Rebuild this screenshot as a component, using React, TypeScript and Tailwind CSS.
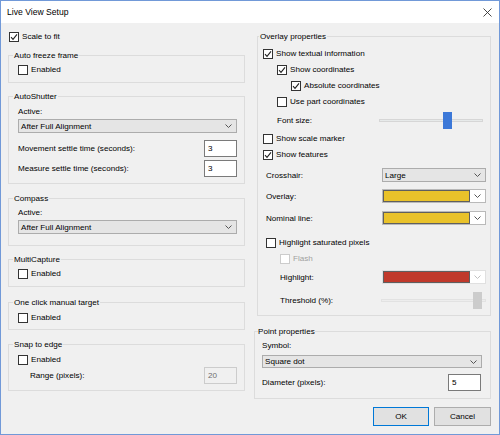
import React from 'react';

function CheckBox({ checked = false, disabled = false }: { checked?: boolean; disabled?: boolean }) {
  return (
    <span
      className={`flex items-center justify-center w-[10px] h-[10px] shrink-0 border bg-white ${
        disabled ? 'border-[#cccccc]' : 'border-[#333333]'
      }`}
    >
      {checked && (
        <svg width="8" height="8" viewBox="0 0 8 8">
          <path d="M1 4.2 L3 6.3 L7 1.4" fill="none" stroke="#222" strokeWidth="1.1" />
        </svg>
      )}
    </span>
  );
}

function CheckRow({
  label, checked, disabled, className = '',
}: { label: string; checked?: boolean; disabled?: boolean; className?: string }) {
  return (
    <div className={`flex items-center h-[13px] gap-[3px] ${className}`}>
      <CheckBox checked={checked} disabled={disabled} />
      <span className={disabled ? 'text-[#a0a0a0]' : ''}>{label}</span>
    </div>
  );
}

function Chevron({ color = '#555555' }: { color?: string }) {
  return (
    <svg width="7" height="4" viewBox="0 0 7 4" className="shrink-0">
      <path d="M0.5 0.5 L3.5 3.5 L6.5 0.5" fill="none" stroke={color} strokeWidth="1" />
    </svg>
  );
}

function Combo({ value, className = '' }: { value: string; className?: string }) {
  return (
    <div className={`flex items-center justify-between border border-[#acacac] bg-[#e5e5e5] pl-[2px] pr-[4px] ${className}`}>
      <span>{value}</span>
      <Chevron />
    </div>
  );
}

function ColorCombo({ swatch, disabled = false }: { swatch: string; disabled?: boolean }) {
  return (
    <div className={`flex items-stretch w-[104px] h-[14px] border bg-white ${disabled ? 'border-[#e0e0e0]' : 'border-[#b9b9b9]'}`}>
      <div className={`flex-1 border border-[#5f5f5f] ${swatch}`} />
      <div className="w-[15px] flex items-center justify-center">
        <Chevron color={disabled ? '#c0c0c0' : '#555555'} />
      </div>
    </div>
  );
}

function TextBox({ value, disabled = false }: { value: string; disabled?: boolean }) {
  return (
    <div
      className={`w-[33px] h-[17px] border pl-[3px] pt-[1px] ${
        disabled ? 'border-[#cccccc] bg-[#f0f0f0] text-[#6d6d6d]' : 'border-[#7a7a7a] bg-white'
      }`}
    >
      {value}
    </div>
  );
}

function Slider({ thumb, disabled = false, className = '' }: { thumb: number; disabled?: boolean; className?: string }) {
  return (
    <div className={`relative h-[17px] ${className}`}>
      <div
        className={`absolute left-0 right-0 top-[7px] h-[3px] border ${
          disabled ? 'bg-[#ededed] border-[#e2e2e2]' : 'bg-[#e7eaea] border-[#d6d6d6]'
        }`}
      />
      <div
        className={`absolute top-0 w-[9px] h-[17px] ${disabled ? 'bg-[#cccccc]' : 'bg-[#3c78d8]'}`}
        style={{ left: thumb }}
      />
    </div>
  );
}

function Group({
  title, className = '', legendClass = 'ml-[4px] px-[1px]', children,
}: { title: string; className?: string; legendClass?: string; children: React.ReactNode }) {
  return (
    <fieldset className={`border border-[#dcdcdc] min-w-0 ${className}`}>
      <legend className={`leading-[13px] ${legendClass}`}>{title}</legend>
      {children}
    </fieldset>
  );
}

export default function App() {
  return (
    <div className="w-[500px] h-[435px] flex flex-col bg-[#f0f0f0] border border-[#7199d8] text-black text-[8.1px] leading-[13px] font-['Liberation_Sans',Arial,sans-serif]">
      {/* Title bar */}
      <div className="h-[22px] shrink-0 bg-white flex items-center justify-between pl-[6px] pr-[7px]">
        <span className="text-[8.6px]">Live View Setup</span>
        <svg width="9" height="9" viewBox="0 0 9 9">
          <path d="M0.5 0.5 L8.5 8.5 M8.5 0.5 L0.5 8.5" stroke="#333" strokeWidth="0.9" />
        </svg>
      </div>

      <div className="flex gap-[9px] pl-[7px]">
        {/* Left column */}
        <div className="w-[237px] flex flex-col">
          <CheckRow label="Scale to fit" checked className="mt-[7px] ml-[1px]" />

          <Group title="Auto freeze frame" className="mt-[6px]">
            <div className="pt-[1px] pl-[9px] pb-[6px]">
              <CheckRow label="Enabled" />
            </div>
          </Group>

          <Group title="AutoShutter" className="mt-[7px]">
            <div className="pt-[2px] pl-[9px] pr-[7px] pb-[6px] flex flex-col">
              <div className="h-[13px]">Active:</div>
              <Combo value="After Full Alignment" className="mt-[1px] h-[14px]" />
              <div className="mt-[7px] h-[17px] flex items-center justify-between">
                <span>Movement settle time (seconds):</span>
                <TextBox value="3" />
              </div>
              <div className="mt-[3px] h-[17px] flex items-center justify-between">
                <span>Measure settle time (seconds):</span>
                <TextBox value="3" />
              </div>
            </div>
          </Group>

          <Group title="Compass" className="mt-[8px]">
            <div className="pt-[1px] pl-[9px] pr-[7px] pb-[11px] flex flex-col">
              <div className="h-[13px]">Active:</div>
              <Combo value="After Full Alignment" className="mt-[1px] h-[14px]" />
            </div>
          </Group>

          <Group title="MultiCapture" className="mt-[7px]">
            <div className="pt-[1px] pl-[9px] pb-[6px]">
              <CheckRow label="Enabled" />
            </div>
          </Group>

          <Group title="One click manual target" className="mt-[9px]">
            <div className="pt-[2px] pl-[9px] pb-[5px]">
              <CheckRow label="Enabled" />
            </div>
          </Group>

          <Group title="Snap to edge" className="mt-[8px]">
            <div className="pt-[2px] pl-[9px] pr-[7px] pb-[6px] flex flex-col">
              <CheckRow label="Enabled" />
              <div className="mt-[1px] h-[17px] flex items-center justify-between">
                <span className="ml-[12px]">Range (pixels):</span>
                <TextBox value="20" disabled />
              </div>
            </div>
          </Group>
        </div>

        {/* Right column */}
        <div className="w-[237px] flex flex-col">
          <Group title="Overlay properties" className="mt-[7px] ml-[3px]" legendClass="ml-[1px] px-[1px]">
            <div className="pt-[4px] pl-[5px] pr-[4px] pb-[6px] flex flex-col">
              <CheckRow label="Show textual information" checked />
              <CheckRow label="Show coordinates" checked className="mt-[3px] ml-[14px]" />
              <CheckRow label="Absolute coordinates" checked className="mt-[3px] ml-[28px]" />
              <CheckRow label="Use part coordinates" className="mt-[3px] ml-[14px]" />
              <div className="mt-[4px] h-[17px] flex items-center justify-between">
                <span className="ml-[14px]">Font size:</span>
                <Slider thumb={64} className="w-[104px] mr-[3px]" />
              </div>
              <CheckRow label="Show scale marker" className="mt-[3px]" />
              <CheckRow label="Show features" checked className="mt-[3px]" />
              <div className="mt-[7px] h-[14px] flex items-center justify-between">
                <span className="ml-[3px]">Crosshair:</span>
                <Combo value="Large" className="w-[104px] h-[14px]" />
              </div>
              <div className="mt-[7px] h-[14px] flex items-center justify-between">
                <span className="ml-[3px]">Overlay:</span>
                <ColorCombo swatch="bg-[#e9c22a]" />
              </div>
              <div className="mt-[8px] h-[14px] flex items-center justify-between">
                <span className="ml-[3px]">Nominal line:</span>
                <ColorCombo swatch="bg-[#e9c22a]" />
              </div>
              <CheckRow label="Highlight saturated pixels" className="mt-[11px] ml-[3px]" />
              <CheckRow label="Flash" disabled className="mt-[3px] ml-[17px]" />
              <div className="mt-[5px] h-[14px] flex items-center justify-between">
                <span className="ml-[17px]">Highlight:</span>
                <ColorCombo swatch="bg-[#c0392b]" disabled />
              </div>
              <div className="mt-[8px] h-[17px] flex items-center justify-between">
                <span className="ml-[17px]">Threshold (%):</span>
                <Slider thumb={92} disabled className="w-[105px]" />
              </div>
            </div>
          </Group>

          <Group title="Point properties" className="mt-[9px]" legendClass="ml-[3px]">
            <div className="pt-[1px] pl-[7px] pr-[8px] pb-[7px] flex flex-col">
              <div className="h-[13px]">Symbol:</div>
              <Combo value="Square dot" className="mt-[3px] h-[13px]" />
              <div className="mt-[6px] h-[17px] flex items-center justify-between">
                <span>Diameter (pixels):</span>
                <div className="mr-[1px]">
                  <TextBox value="5" />
                </div>
              </div>
            </div>
          </Group>

          <div className="mt-[8px] flex justify-end gap-[5px]">
            <button className="w-[56px] h-[19px] border border-[#0078d7] bg-[#e1e1e1] leading-[17px]">OK</button>
            <button className="w-[57px] h-[19px] border border-[#adadad] bg-[#e1e1e1] leading-[17px]">Cancel</button>
          </div>
        </div>
      </div>
    </div>
  );
}
